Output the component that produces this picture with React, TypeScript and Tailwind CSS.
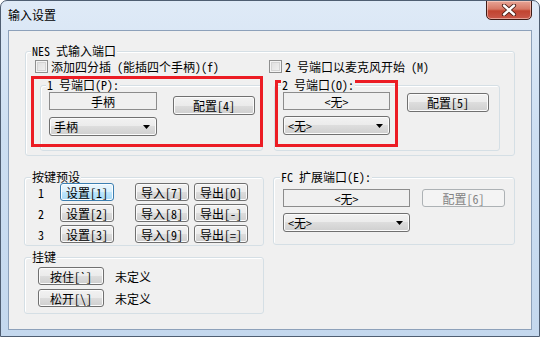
import React from "react";

const FONT = "font-['Noto_Sans_Mono_CJK_SC','Noto_Sans_CJK_SC',sans-serif]";

const BTN_NORMAL =
  "border-[#707070] bg-[linear-gradient(to_bottom,#f2f2f2_0%,#ebebeb_50%,#dddddd_50%,#cfcfcf_100%)] shadow-[inset_0_0_0_1px_#fbfbfb]";
const BTN_FOCUS =
  "border-[#3c7fb1] bg-[linear-gradient(to_bottom,#eaf6fd_0%,#d9f0fc_50%,#bee6fd_50%,#a7d9f5_100%)] shadow-[inset_0_0_0_1px_#fbfdff]";
const BTN_DISABLED = "border-[#adb2b5] bg-[#f4f4f4] text-[#838383]";

function Btn({
  children,
  className,
  kind = "normal",
}: {
  children: React.ReactNode;
  className: string;
  kind?: "normal" | "focus" | "disabled";
}) {
  const k = kind === "focus" ? BTN_FOCUS : kind === "disabled" ? BTN_DISABLED : BTN_NORMAL;
  return (
    <div
      className={`flex shrink-0 items-center justify-center rounded-[3px] border text-[12px] leading-[13px] ${k} ${className}`}
    >
      {children}
    </div>
  );
}

function Readout({ children, className }: { children: React.ReactNode; className: string }) {
  return (
    <div
      className={`flex items-center justify-center border border-[#8c8c8c] bg-[#f0f0f0] text-[12px] leading-[13px] ${className}`}
    >
      {children}
    </div>
  );
}

function Combo({ children, className }: { children: React.ReactNode; className: string }) {
  return (
    <div
      className={`flex items-center justify-between rounded-[3px] border pl-[4px] pr-[6px] text-[12px] leading-[13px] ${BTN_NORMAL} ${className}`}
    >
      <span>{children}</span>
      <svg width="7" height="4" viewBox="0 0 7 4">
        <polygon points="0,0 7,0 3.5,4" fill="#000" />
      </svg>
    </div>
  );
}

function Check({ label }: { label: string }) {
  return (
    <div className="flex items-center gap-[3px]">
      <div className="h-[13px] w-[13px] shrink-0 border border-[#8e8f8f] bg-[linear-gradient(135deg,#dcdcdc,#f4f4f4)] shadow-[inset_0_0_0_1px_#f4f4f4,inset_0_0_0_2px_#d4d4d4]" />
      <span className="text-[12px] leading-[12px]">{label}</span>
    </div>
  );
}

function Group({
  label,
  labelClass,
  className,
  bodyClass,
  children,
}: {
  label: string;
  labelClass: string;
  className: string;
  bodyClass: string;
  children?: React.ReactNode;
}) {
  return (
    <div className={`flex flex-col ${className}`}>
      <div className="relative z-10 flex h-[14px] items-center">
        <span className={`bg-[#f0f0f0] px-[1px] text-[12px] leading-[12px] ${labelClass}`}>{label}</span>
      </div>
      <div
        className={`-mt-[7px] flex-1 rounded-[3px] border border-[#d5dfe5] shadow-[inset_1px_1px_0_#ffffff] ${bodyClass}`}
      >
        {children}
      </div>
    </div>
  );
}

export default function App() {
  return (
    <div
      className={`relative flex h-[337px] w-[540px] flex-col overflow-hidden rounded-t-[7px] border border-[#4f5e72] bg-[linear-gradient(to_bottom,#dfeaf7_0%,#cddff2_40%,#c4d8ee_100%)] text-black ${FONT}`}
    >
      {/* Title bar */}
      <div className="flex h-[29px] shrink-0 items-start justify-between">
        <span className="ml-[7px] mt-[7px] text-[12px] leading-[14px] font-['Noto_Sans_CJK_SC',sans-serif]">
          输入设置
        </span>
        <div className="-mt-px mr-[7px] flex h-[20px] w-[46px] items-center justify-center rounded-b-[5px] border border-[#3f1b16] bg-[linear-gradient(to_bottom,#e8a596_0%,#d77865_45%,#c14430_55%,#c9584a_100%)] shadow-[inset_0_0_0_1px_rgba(255,220,210,0.55)]">
          <svg width="16" height="12" viewBox="0 0 16 12">
            <path d="M3 1.5 L13 10.5 M13 1.5 L3 10.5" stroke="#4a1d16" strokeWidth="4.2" strokeLinecap="round" />
            <path d="M3 1.5 L13 10.5 M13 1.5 L3 10.5" stroke="#ffffff" strokeWidth="2.4" strokeLinecap="round" />
          </svg>
        </div>
      </div>

      {/* Client area */}
      <div className="mx-[7px] h-[300px] shrink-0 border border-[#8da1ba] bg-[#f0f0f0]">
        <div className="pl-[16px] pt-[13px]">
          {/* NES group */}
          <Group label="NES 式输入端口" labelClass="ml-[6px]" className="h-[112px] w-[490px]" bodyClass="pt-[8px]">
            <div className="flex h-[13px] items-center pl-[9px]">
              <div className="w-[234px]">
                <Check label="添加四分插 (能插四个手柄)(f)" />
              </div>
              <Check label="2 号端口以麦克风开始 (M)" />
            </div>
            <div className="mt-[5px] flex">
              <Group
                label="1 号端口(P):"
                labelClass="ml-[6px]"
                className="ml-[14px] h-[73px] w-[223px]"
                bodyClass="flex pl-[8px] pt-[6px]"
              >
                <div className="flex flex-col">
                  <Readout className="h-[18px] w-[108px]">手柄</Readout>
                  <Combo className="mt-[7px] h-[19px] w-[108px]">手柄</Combo>
                </div>
                <Btn className="ml-[16px] mt-[4px] h-[19px] w-[82px]">配置[4]</Btn>
              </Group>
              <Group
                label="2 号端口(O):"
                labelClass="ml-[7px]"
                className="ml-[11px] h-[73px] w-[226px]"
                bodyClass="flex pl-[8px] pt-[6px]"
              >
                <div className="flex flex-col">
                  <Readout className="h-[18px] w-[107px]">&lt;无&gt;</Readout>
                  <Combo className="mt-[6px] h-[19px] w-[107px]">&lt;无&gt;</Combo>
                </div>
                <Btn className="ml-[17px] mt-[1px] h-[19px] w-[82px]">配置[5]</Btn>
              </Group>
            </div>
          </Group>

          {/* Lower section */}
          <div className="-ml-px mt-[14px] flex">
            <div className="flex w-[240px] flex-col">
              <Group label="按键预设" labelClass="ml-[7px]" className="h-[76px] w-[240px]" bodyClass="flex flex-col gap-[3px] pl-[13px] pt-[5px]">
                {[
                  ["1", "设置[1]", "导入[7]", "导出[0]"],
                  ["2", "设置[2]", "导入[8]", "导出[-]"],
                  ["3", "设置[3]", "导入[9]", "导出[=]"],
                ].map((r, i) => (
                  <div key={r[0]} className="flex h-[18px] items-center">
                    <span className="w-[22px] pt-[2px] text-[12px] leading-[12px]">{r[0]}</span>
                    <Btn className="h-[18px] w-[54px]" kind={i === 0 ? "focus" : "normal"}>
                      {r[1]}
                    </Btn>
                    <Btn className="ml-[21px] h-[18px] w-[54px]">{r[2]}</Btn>
                    <Btn className="ml-[5px] h-[18px] w-[54px]">{r[3]}</Btn>
                  </div>
                ))}
              </Group>
              <Group label="挂键" labelClass="ml-[7px]" className="mt-[4px] h-[64px] w-[240px]" bodyClass="flex flex-col gap-[4px] pl-[13px] pt-[9px]">
                <div className="flex h-[18px] items-center">
                  <Btn className="h-[18px] w-[66px]">按住[`]</Btn>
                  <span className="ml-[11px] text-[12px] leading-[13px]">未定义</span>
                </div>
                <div className="flex h-[18px] items-center">
                  <Btn className="h-[18px] w-[66px]">{"松开[\\]"}</Btn>
                  <span className="ml-[11px] text-[12px] leading-[13px]">未定义</span>
                </div>
              </Group>
            </div>
            <Group
              label="FC 扩展端口(E):"
              labelClass="ml-[7px]"
              className="ml-[9px] h-[75px] w-[242px]"
              bodyClass="pl-[9px] pt-[11px]"
            >
              <div className="flex">
                <Readout className="h-[18px] w-[127px]">&lt;无&gt;</Readout>
                <Btn className="ml-[12px] h-[18px] w-[83px]" kind="disabled">
                  配置[6]
                </Btn>
              </div>
              <Combo className="mt-[6px] h-[19px] w-[127px]">&lt;无&gt;</Combo>
            </Group>
          </div>
        </div>
      </div>

      {/* Red annotation rectangles */}
      <div className="pointer-events-none absolute left-[30px] top-[75px] h-[71px] w-[232px] border-[3px] border-[#ec1c24]" />
      <div className="pointer-events-none absolute left-[274px] top-[79px] h-[67px] w-[123px] border-[3px] border-[#ec1c24]" />
    </div>
  );
}
